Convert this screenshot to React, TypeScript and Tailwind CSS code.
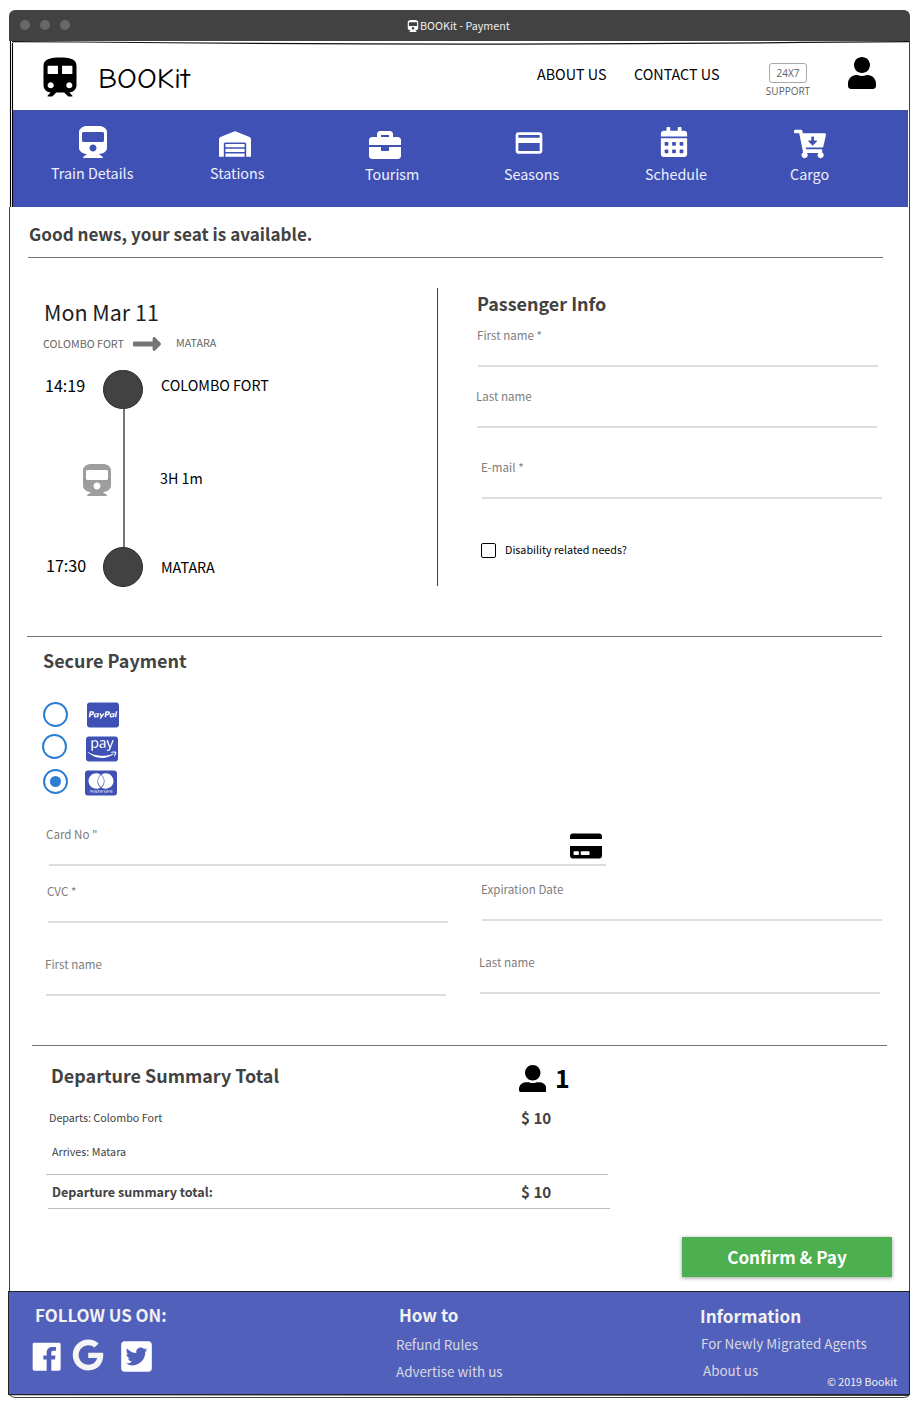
import type { ReactNode } from "react";
import {
  FaBriefcase,
  FaCalendarAlt,
  FaCartArrowDown,
  FaCcAmazonPay,
  FaCcMastercard,
  FaCcPaypal,
  FaCreditCard,
  FaGoogle,
  FaLongArrowAltRight,
  FaTrain,
  FaTwitterSquare,
  FaUser,
  FaUserAlt,
  FaWarehouse,
} from "react-icons/fa";
import { IoLogoFacebook, IoMdTrain } from "react-icons/io";
import { MdPayment } from "react-icons/md";

function WindowFrame() {
  return (
    <svg className="pointer-events-none absolute left-0 top-0" width="919" height="1401" fill="none">
      <path d="M9.5 207V1291M909.5 41V1291" stroke="#424242" />
      <path d="M10.5 41V207M12.5 43V207" stroke="#000" strokeWidth="1.1" />
      <path d="M12 41.6L80 42Q460 46 840 42.2L909 41.6" stroke="#111" strokeWidth="1.2" />
      <path d="M10 1395.2Q12 1397.5 16 1397.5H903Q908 1397.5 909.5 1395" stroke="#424242" />
      <path d="M9 1394.8L909 1395.5" stroke="#222" strokeWidth="0.9" />
    </svg>
  );
}

function TitleBar() {
  return (
    <div className="ml-[9px] flex h-[31px] w-[901px] rounded-t-[6px] bg-[#424242] text-[#f0f0f0]">
      <div className="flex w-[398px] gap-[10px] pl-[11px] pt-[10px]">
        <span className="size-[10px] rounded-full bg-[#686868]" />
        <span className="size-[10px] rounded-full bg-[#686868]" />
        <span className="size-[10px] rounded-full bg-[#686868]" />
      </div>
      <FaTrain size={12} className="mt-[10px] text-white" />
      <span className="ml-[1px] mt-[7px] text-[10.74px] leading-[18px]">BOOKit - Payment</span>
    </div>
  );
}

function Header() {
  return (
    <header className="flex h-[69px] items-start text-[14.32px] text-black">
      <IoMdTrain size={48} className="ml-[36px] mt-[12px]" />
      <span className="ml-[13.5px] mt-[20px] w-[439.5px] origin-left scale-x-[1.1] font-['Comic_Neue',cursive] text-[28px] leading-[36px]">
        BOOKit
      </span>
      <span className="mt-[23px] w-[97px] leading-[20px]">ABOUT US</span>
      <span className="mt-[23px] w-[131px] leading-[20px]">CONTACT US</span>
      <div className="mt-[22px] flex w-[46px] flex-col items-center font-['Open_Sans',sans-serif] text-[10px] text-[#616161]">
        <span className="flex h-[20px] w-[38px] items-center justify-center rounded-[3px] border border-[#a9a9a9] leading-[18px]">
          24X7
        </span>
        <span className="mt-[1px] leading-[14px]">SUPPORT</span>
      </div>
      <FaUser size={32} className="ml-[35px] mt-[16px]" />
    </header>
  );
}

function NavItem({ icon, label, cell, iconCell }: { icon: ReactNode; label: string; cell: string; iconCell: string }) {
  return (
    <a className={`flex shrink-0 flex-col ${cell}`}>
      <span className={`flex h-[52px] text-white ${iconCell}`}>{icon}</span>
      <span className="whitespace-nowrap leading-[20px]">{label}</span>
    </a>
  );
}

function NavBar() {
  return (
    <nav className="ml-[13px] flex h-[97px] w-[895px] bg-[#3f51b5] pl-[38px] text-[14.32px] text-[#eef0fa]">
      <NavItem icon={<FaTrain size={32} />} label="Train Details" cell="w-[159px] pt-[1px]" iconCell="pl-[26px] pt-[15px]" />
      <NavItem icon={<FaWarehouse size={32} />} label="Stations" cell="w-[155px] pt-[1px]" iconCell="pl-[9px] pt-[17px]" />
      <NavItem icon={<FaBriefcase size={32} />} label="Tourism" cell="w-[139px] pt-[2px]" iconCell="pl-[4px] pt-[17px]" />
      <NavItem icon={<MdPayment size={32} />} label="Seasons" cell="w-[141px] pt-[2px]" iconCell="pl-[9px] pt-[15px]" />
      <NavItem icon={<FaCalendarAlt size={30} />} label="Schedule" cell="w-[145px] pt-[2px]" iconCell="pl-[14px] pt-[15px]" />
      <NavItem icon={<FaCartArrowDown size={32} />} label="Cargo" cell="w-[60px] pt-[2px]" iconCell="pl-[4px] pt-[16px]" />
    </nav>
  );
}

function Field({ label, className }: { label: string; className: string }) {
  return (
    <label className={`flex h-[40px] flex-col ${className}`}>
      <span className="h-[38px] pl-[1px] text-[11.6px] leading-[16px] text-[#7d7d7d]">{label}</span>
      <span className="ml-[2px] h-[2px] bg-[#dddddd]" />
    </label>
  );
}

function Trip() {
  return (
    <div className="flex w-[437px] flex-col">
      <h2 className="ml-[44px] mt-[40px] text-[21.48px] leading-[28px] text-[#212121]">Mon Mar 11</h2>
      <div className="flex h-[43px] pl-[43px] text-[10.74px] leading-[16px] text-[#666666]">
        <span className="mt-[9.5px] w-[88px]">COLOMBO FORT</span>
        <FaLongArrowAltRight size={32} className="mt-[2px] text-[#757575]" />
        <span className="ml-[13px] mt-[8.5px]">MATARA</span>
      </div>
      <div className="flex text-black">
        <div className="flex w-[103px] flex-col text-[16.1px] leading-[20px]">
          <span className="ml-[45px] mt-[6px]">14:19</span>
          <FaTrain size={32} className="ml-[81px] mt-[69px] text-[#9e9e9e]" />
          <span className="ml-[46px] mt-[59px]">17:30</span>
        </div>
        <div className="flex w-[40px] flex-col items-center pt-[0.5px]">
          <span className="size-[39.5px] rounded-full border border-[#2a2a2a] bg-[#424242]" />
          <span className="ml-[2px] h-[138px] w-[2px] bg-[#757575]" />
          <span className="size-[39.5px] rounded-full border border-[#2a2a2a] bg-[#424242]" />
        </div>
        <div className="flex flex-col pl-[17px] text-[14.32px] leading-[20px]">
          <span className="ml-[1px] mt-[5.7px]">COLOMBO FORT</span>
          <span className="mt-[73.3px]">3H 1m</span>
          <span className="ml-[1px] mt-[68.7px]">MATARA</span>
        </div>
      </div>
    </div>
  );
}

function PassengerInfo() {
  return (
    <div className="flex flex-col">
      <h2 className="ml-[39px] mt-[33px] text-[17.95px] font-bold leading-[24px] text-[#424242]">Passenger Info</h2>
      <Field label="First name *" className="ml-[38px] mt-[12px] w-[402px]" />
      <Field label="Last name" className="ml-[37px] mt-[21px] w-[402px]" />
      <Field label="E-mail *" className="ml-[42px] mt-[31px] w-[402px]" />
      <label className="ml-[43px] mt-[41px] flex text-[10.74px] leading-[20px] text-black">
        <span className="mr-[9px] mt-[3px] size-[15px] rounded-[2px] border-[1.4px] border-black" />
        Disability related needs?
      </label>
    </div>
  );
}

function Radio({ checked = false, className }: { checked?: boolean; className: string }) {
  return (
    <span className={`flex size-[25px] items-center justify-center rounded-full border-2 border-[#2d7dd2] ${className}`}>
      {checked && <span className="size-[11px] rounded-full bg-[#2d7dd2]" />}
    </span>
  );
}

function Payment() {
  return (
    <section className="h-[408px] pt-[11px]">
      <h2 className="ml-[43px] text-[17.95px] font-bold leading-[24px] text-[#424242]">Secure Payment</h2>
      <div className="mt-[27px] flex flex-col gap-[2px] text-[#3f51b5]">
        <div className="flex h-[32px] pl-[43px]">
          <Radio className="mt-[3px]" />
          <FaCcPaypal size={32} className="ml-[19px]" />
        </div>
        <div className="flex h-[32px] pl-[42px]">
          <Radio className="mt-[1px]" />
          <FaCcAmazonPay size={32} className="ml-[19px]" />
        </div>
        <div className="flex h-[32px] pl-[43px]">
          <Radio checked className="mt-[2px]" />
          <FaCcMastercard size={32} className="ml-[17px]" />
        </div>
      </div>
      <div className="mt-[27px] flex h-[40px] w-[606px] flex-col pl-[46px]">
        <div className="flex h-[38px] justify-between text-[11.6px] leading-[16px] text-[#7d7d7d]">
          Card No "
          <FaCreditCard size={32} className="mr-[4px] mt-[4px] text-black" />
        </div>
        <span className="ml-[3px] h-[2px] bg-[#dddddd]" />
      </div>
      <div className="mt-[15px] flex">
        <Field label="CVC *" className="ml-[46px] mt-[2px] w-[402px]" />
        <Field label="Expiration Date" className="ml-[32px] w-[402px]" />
      </div>
      <div className="mt-[31px] flex">
        <Field label="First name" className="ml-[44px] mt-[2px] w-[402px]" />
        <Field label="Last name" className="ml-[32px] w-[402px]" />
      </div>
    </section>
  );
}

function Summary() {
  return (
    <section className="flex h-[245px] flex-col text-[#424242]">
      <div className="flex h-[62px]">
        <h2 className="ml-[51px] mt-[17px] w-[467.5px] text-[17.95px] font-bold leading-[24px]">Departure Summary Total</h2>
        <FaUserAlt size={27.5} className="mt-[18.5px] text-black" />
        <span className="ml-[9px] mt-[15px] text-[25px] font-bold leading-[32px] text-black">1</span>
      </div>
      <div className="flex">
        <div className="flex w-[521px] flex-col pl-[49px] text-[10.74px] leading-[16px]">
          <span className="mt-[1.5px]">Departs: Colombo Fort</span>
          <span className="ml-[3px] mt-[18px]">Arrives: Matara</span>
        </div>
        <span className="-mt-px text-[15.2px] font-bold leading-[20px]">$ 10</span>
      </div>
      <div className="ml-[46px] mt-[14.5px] h-px w-[562px] bg-[#bdbdbd]" />
      <div className="flex h-[33px] font-bold leading-[20px]">
        <span className="w-[521px] pl-[52px] pt-[6.5px] text-[12.6px]">Departure summary total:</span>
        <span className="pt-[5.5px] text-[15.2px]">$ 10</span>
      </div>
      <div className="ml-[48px] h-px w-[562px] bg-[#bdbdbd]" />
      <button className="ml-[682px] mt-[28px] flex h-[40px] w-[210px] items-center justify-center bg-[#4caf50] text-[17.15px] font-bold leading-[24px] text-white shadow-[0_1px_4px_rgba(0,0,0,0.4)]">
        Confirm &amp; Pay
      </button>
    </section>
  );
}

function Footer() {
  return (
    <footer className="ml-[8px] flex h-[104px] w-[902px] border border-[#222222] bg-[#5160bb] text-[13.43px] leading-[20px] text-[#d8d9e2]">
      <div className="flex w-[387px] flex-col">
        <h3 className="ml-[26px] mt-[11px] text-[16.9px] font-bold leading-[24px] text-[#f1f1f1]">FOLLOW US ON:</h3>
        <div className="flex text-white">
          <IoLogoFacebook size={37.3} className="ml-[19px] mt-[11px]" />
          <FaGoogle size={32} className="ml-[7.2px] mt-[12px] text-[#f5f5f5]" />
          <FaTwitterSquare size={35} className="ml-[15px] mt-[12px]" />
        </div>
      </div>
      <div className="flex w-[304px] flex-col">
        <h3 className="ml-[3px] mt-[11px] text-[17px] font-bold leading-[24px] text-[#f1f1f1]">How to</h3>
        <span className="mt-[6.5px]">Refund Rules</span>
        <span className="mt-[7px]">Advertise with us</span>
      </div>
      <div className="flex flex-col">
        <h3 className="mt-[12px] text-[17.1px] font-bold leading-[24px] text-[#f1f1f1]">Information</h3>
        <span className="ml-[1px] mt-[5.2px]">For Newly Migrated Agents</span>
        <div className="ml-[3px] mt-[7px] flex">
          <span className="w-[124px]">About us</span>
          <small className="whitespace-nowrap pt-[11.5px] text-[10.7px] text-[#f1f1f1]">© 2019 Bookit</small>
        </div>
      </div>
    </footer>
  );
}

export default function App() {
  return (
    <div className="relative h-[1401px] w-[919px] overflow-hidden bg-white pt-[10px] font-['Noto_Sans_CJK_SC',sans-serif]">
      <TitleBar />
      <Header />
      <NavBar />
      <main>
        <h1 className="h-[50px] pl-[29px] pt-[15px] text-[17.1px] font-bold leading-[24px] text-[#424242]">
          Good news, your seat is available.
        </h1>
        <div className="ml-[28px] h-px w-[855px] bg-[#757575]" />
        <section className="flex h-[378px]">
          <Trip />
          <div className="mt-[30px] h-[298px] w-px bg-[#424242]" />
          <PassengerInfo />
        </section>
        <div className="ml-[27px] h-px w-[855px] bg-[#757575]" />
        <Payment />
        <div className="ml-[32px] h-px w-[855px] bg-[#757575]" />
        <Summary />
      </main>
      <Footer />
      <WindowFrame />
    </div>
  );
}
